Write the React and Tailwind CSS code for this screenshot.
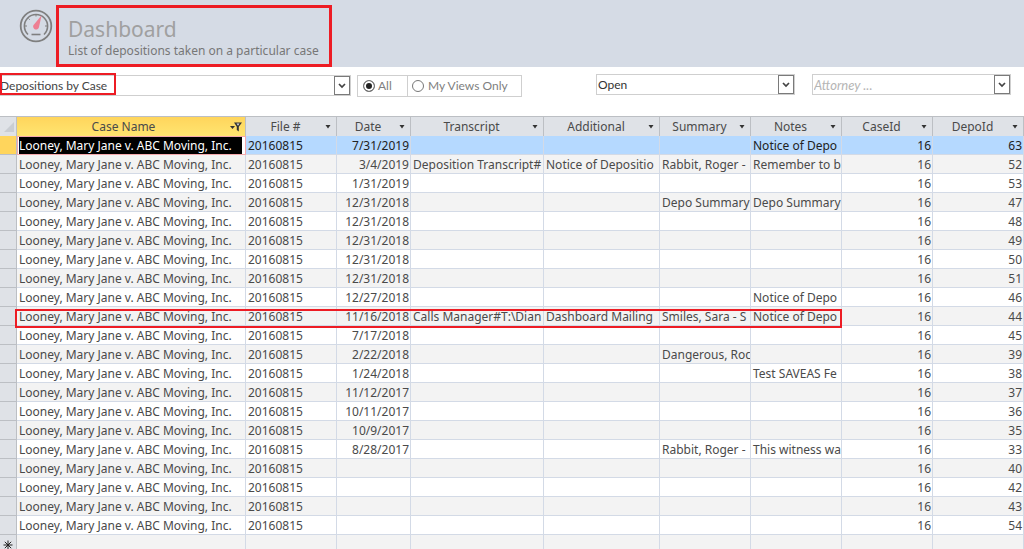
import React from "react";

const columns = [
  { key: "caseName", label: "Case Name", width: "w-[229px]" },
  { key: "file", label: "File #", width: "w-[91px]" },
  { key: "date", label: "Date", width: "w-[74px]", right: true },
  { key: "transcript", label: "Transcript", width: "w-[133px]" },
  { key: "additional", label: "Additional", width: "w-[116px]" },
  { key: "summary", label: "Summary", width: "w-[91px]" },
  { key: "notes", label: "Notes", width: "w-[91px]" },
  { key: "caseId", label: "CaseId", width: "w-[91px]", right: true },
  { key: "depoId", label: "DepoId", width: "w-[91px]", right: true },
];

const depositions = [
  { depoId: 63, date: "7/31/2019", notes: "Notice of Depo" },
  {
    depoId: 52,
    date: "3/4/2019",
    transcript: "Deposition Transcript#",
    additional: "Notice of Depositio",
    summary: "Rabbit, Roger -",
    notes: "Remember to b",
  },
  { depoId: 53, date: "1/31/2019" },
  { depoId: 47, date: "12/31/2018", summary: "Depo Summary", notes: "Depo Summary" },
  { depoId: 48, date: "12/31/2018" },
  { depoId: 49, date: "12/31/2018" },
  { depoId: 50, date: "12/31/2018" },
  { depoId: 51, date: "12/31/2018" },
  { depoId: 46, date: "12/27/2018", notes: "Notice of Depo" },
  {
    depoId: 44,
    date: "11/16/2018",
    transcript: "Calls Manager#T:\\Dian",
    additional: "Dashboard Mailing",
    summary: "Smiles, Sara - S",
    notes: "Notice of Depo",
    marked: true,
  },
  { depoId: 45, date: "7/17/2018" },
  { depoId: 39, date: "2/22/2018", summary: "Dangerous, Roc" },
  { depoId: 38, date: "1/24/2018", notes: "Test SAVEAS Fe" },
  { depoId: 37, date: "11/12/2017" },
  { depoId: 36, date: "10/11/2017" },
  { depoId: 35, date: "10/9/2017" },
  { depoId: 33, date: "8/28/2017", summary: "Rabbit, Roger -", notes: "This witness wa" },
  { depoId: 40 },
  { depoId: 42 },
  { depoId: 43 },
  { depoId: 54 },
].map((row) => ({ caseName: "Looney, Mary Jane v. ABC Moving, Inc.", file: "20160815", caseId: 16, ...row }));

const GaugeIcon = () => (
  <svg viewBox="0 0 34 34" className="size-[34px] shrink-0" fill="none" stroke="#7f7f7f">
    <circle cx="17" cy="17" r="15.3" strokeWidth="1.8" />
    <path d="M9 25.5A11.6 11.6 0 1 1 25 25.5" strokeWidth="1.6" />
    <path d="M6 17h2M9.5 9.5l1.2 1.2M17 6v1.5M28 17h-2" strokeWidth="1" />
    <path d="M22.6 6.2 19.9 18.6A3 3 0 1 1 15.2 15.2Z" fill="#ee7f93" stroke="none" />
    <path d="M12.5 25.5h9" strokeWidth="1.6" />
  </svg>
);

const FilterIcon = () => (
  <svg viewBox="0 0 12 10" className="h-[10px] w-3 shrink-0" fill="#333">
    <path d="M4 .5h8L8.8 4.8V9.5L6.8 8V4.8Z" />
    <path d="M0 4h5L2.5 7Z" />
    <path d="M6.5 1.6h3L8 3.8Z" fill="#ddd" />
  </svg>
);

const DownArrow = () => (
  <svg viewBox="0 0 6 4" className="h-1 w-[6px] shrink-0" fill="#333">
    <path d="M.5 0h5L3 3.5Z" />
  </svg>
);

const NewRecordIcon = () => (
  <svg viewBox="0 0 10 10" className="mx-auto size-[10px]" stroke="#222" strokeWidth="1">
    <path d="M5 .5v9M.5 5h9M1.8 1.8l6.4 6.4M8.2 1.8 1.8 8.2" />
  </svg>
);

const ComboBox = ({ label, children, className = "", textClass = "text-[12px] text-[#444]" }) => (
  <div className={`grid h-[21px] border border-[#cfcfcf] bg-white ${className}`}>
    <select
      aria-label={label}
      className={`col-start-1 row-start-1 w-full appearance-none bg-transparent pr-4 leading-[18px] outline-none ${textClass}`}
    >
      {children}
    </select>
    <span className="pointer-events-none col-start-1 row-start-1 flex w-4 items-center justify-center justify-self-end border border-[#7a7a7a] bg-white">
      <svg viewBox="0 0 8 6" className="h-[6px] w-2" fill="none" stroke="#444" strokeWidth="1.7">
        <path d="M1 1l3 3 3-3" />
      </svg>
    </span>
  </div>
);

const Header = () => (
  <header className="flex h-[67px] items-start bg-[#d5dbe5] pl-[19px]">
    <div className="pt-[9px]">
      <GaugeIcon />
    </div>
    <div className="ml-[3px] mt-[5px] h-[62px] border-[3px] border-[#ed1c24] pl-[9px] pr-[10px] pt-[7px]">
      <h1 className="text-[21px] leading-[28px] text-[#a0a0a0]">Dashboard</h1>
      <p className="whitespace-nowrap text-[12px] leading-[16px] text-[#777]">
        List of depositions taken on a particular case
      </p>
    </div>
  </header>
);

const Toolbar = () => (
  <div className="flex h-[49px] items-start pr-[13px] pt-[7px] font-['Lato','Open_Sans',sans-serif]">
    <div className="relative mt-px w-[351px]">
      <ComboBox label="View" className="border-l-0">
        <option>Depositions by Case</option>
      </ComboBox>
      <span className="pointer-events-none absolute -top-[2px] left-0 h-[22px] w-[116px] border-2 border-[#ed1c24]" />
    </div>
    <fieldset className="ml-[6px] mt-px flex h-[22px] border border-[#cfcfcf] text-[12px] text-[#808080]">
      <label className="flex w-[50px] items-center gap-[3px] border-r border-[#cfcfcf] pl-[5px]">
        <input
          type="radio"
          name="views"
          defaultChecked
          className="size-3 appearance-none rounded-full border border-[#777] bg-white checked:bg-[#222] checked:shadow-[inset_0_0_0_2px_#fff]"
        />
        All
      </label>
      <label className="flex w-[113px] items-center gap-1 whitespace-nowrap pl-1">
        <input
          type="radio"
          name="views"
          className="size-3 appearance-none rounded-full border border-[#777] bg-white checked:bg-[#222] checked:shadow-[inset_0_0_0_2px_#fff]"
        />
        My Views Only
      </label>
    </fieldset>
    <div className="ml-auto flex gap-[17px]">
      <ComboBox label="Status" className="w-[199px]" textClass="pl-px text-[12px] text-[#333]">
        <option>Open</option>
      </ComboBox>
      <ComboBox label="Attorney" className="w-[199px]" textClass="pl-px text-[13px] italic text-[#b5b5b5]">
        <option>Attorney ...</option>
      </ComboBox>
    </div>
  </div>
);

const ColumnHeader = ({ column, active }) => (
  <th
    scope="col"
    className={`h-5 border-r border-t border-[#bcbfc4] p-0 font-normal ${
      active ? "bg-linear-to-b from-[#ffd55c] to-[#ffe570]" : "bg-[#dfe2e7]"
    }`}
  >
    <div className={`flex items-center ${active ? "pr-[3px]" : "pr-[5px]"}`}>
      <span className="flex-1 text-center">{column.label}</span>
      {active ? <FilterIcon /> : <DownArrow />}
    </div>
  </th>
);

const DepositionRow = ({ row, index }) => {
  const current = index === 0;
  return (
    <tr
      className={`${row.marked ? "relative z-10" : ""} ${
        current ? "bg-[#b5d9ff] text-[#222]" : index % 2 ? "bg-[#f3f3f3]" : "bg-white"
      }`}
    >
      <th className={`h-[19px] border-b border-r border-[#bcbfc4] p-0 ${current ? "bg-[#ffd55c]" : "bg-[#dfe2e7]"}`}>
        {row.marked && (
          <span className="pointer-events-none absolute -bottom-[2px] left-[15px] right-[17.8%] top-[2px] border-2 border-[#ed1c24]" />
        )}
      </th>
      {columns.map((column) => {
        const selected = current && column.key === "caseName";
        return (
          <td
            key={column.key}
            className={`h-[19px] border-b border-r border-[#d3dae6] p-0 ${column.right ? "text-right" : ""} ${
              selected ? "bg-white outline outline-[#f5a9ad] -outline-offset-1" : ""
            }`}
          >
            <div
              className={`h-[18px] overflow-hidden whitespace-nowrap leading-[20px] ${
                selected ? "ml-[2px] mr-[3px] bg-black text-white" : column.right ? "pr-px" : "pl-[2px]"
              }`}
            >
              {row[column.key]}
            </div>
          </td>
        );
      })}
    </tr>
  );
};

const DepositionTable = () => (
  <table className="w-full table-fixed border-separate border-spacing-0 text-[12px] leading-[18px] text-[#4a4a4a]">
    <colgroup>
      <col className="w-[17px]" />
      {columns.map((column) => (
        <col key={column.key} className={column.width} />
      ))}
    </colgroup>
    <thead>
      <tr>
        <th className="h-5 border-r border-t border-[#bcbfc4] bg-[#dfe2e7] p-0">
          <svg viewBox="0 0 10 10" className="ml-1 size-[10px]" fill="#c9cdd3">
            <path d="M10 0v10H0Z" />
          </svg>
        </th>
        {columns.map((column, i) => (
          <ColumnHeader key={column.key} column={column} active={i === 0} />
        ))}
      </tr>
    </thead>
    <tbody>
      {depositions.map((row, i) => (
        <DepositionRow key={row.depoId} row={row} index={i} />
      ))}
      <tr className="bg-[#f3f3f3]">
        <th aria-label="New record" className="h-[19px] border-r border-[#bcbfc4] bg-[#dfe2e7] p-0">
          <NewRecordIcon />
        </th>
        {columns.map((column) => (
          <td key={column.key} className="border-r border-[#d3dae6] p-0" />
        ))}
      </tr>
    </tbody>
  </table>
);

export default function App() {
  return (
    <main className="h-screen overflow-hidden bg-white font-['Noto_Sans','Open_Sans',sans-serif]">
      <Header />
      <Toolbar />
      <DepositionTable />
    </main>
  );
}
